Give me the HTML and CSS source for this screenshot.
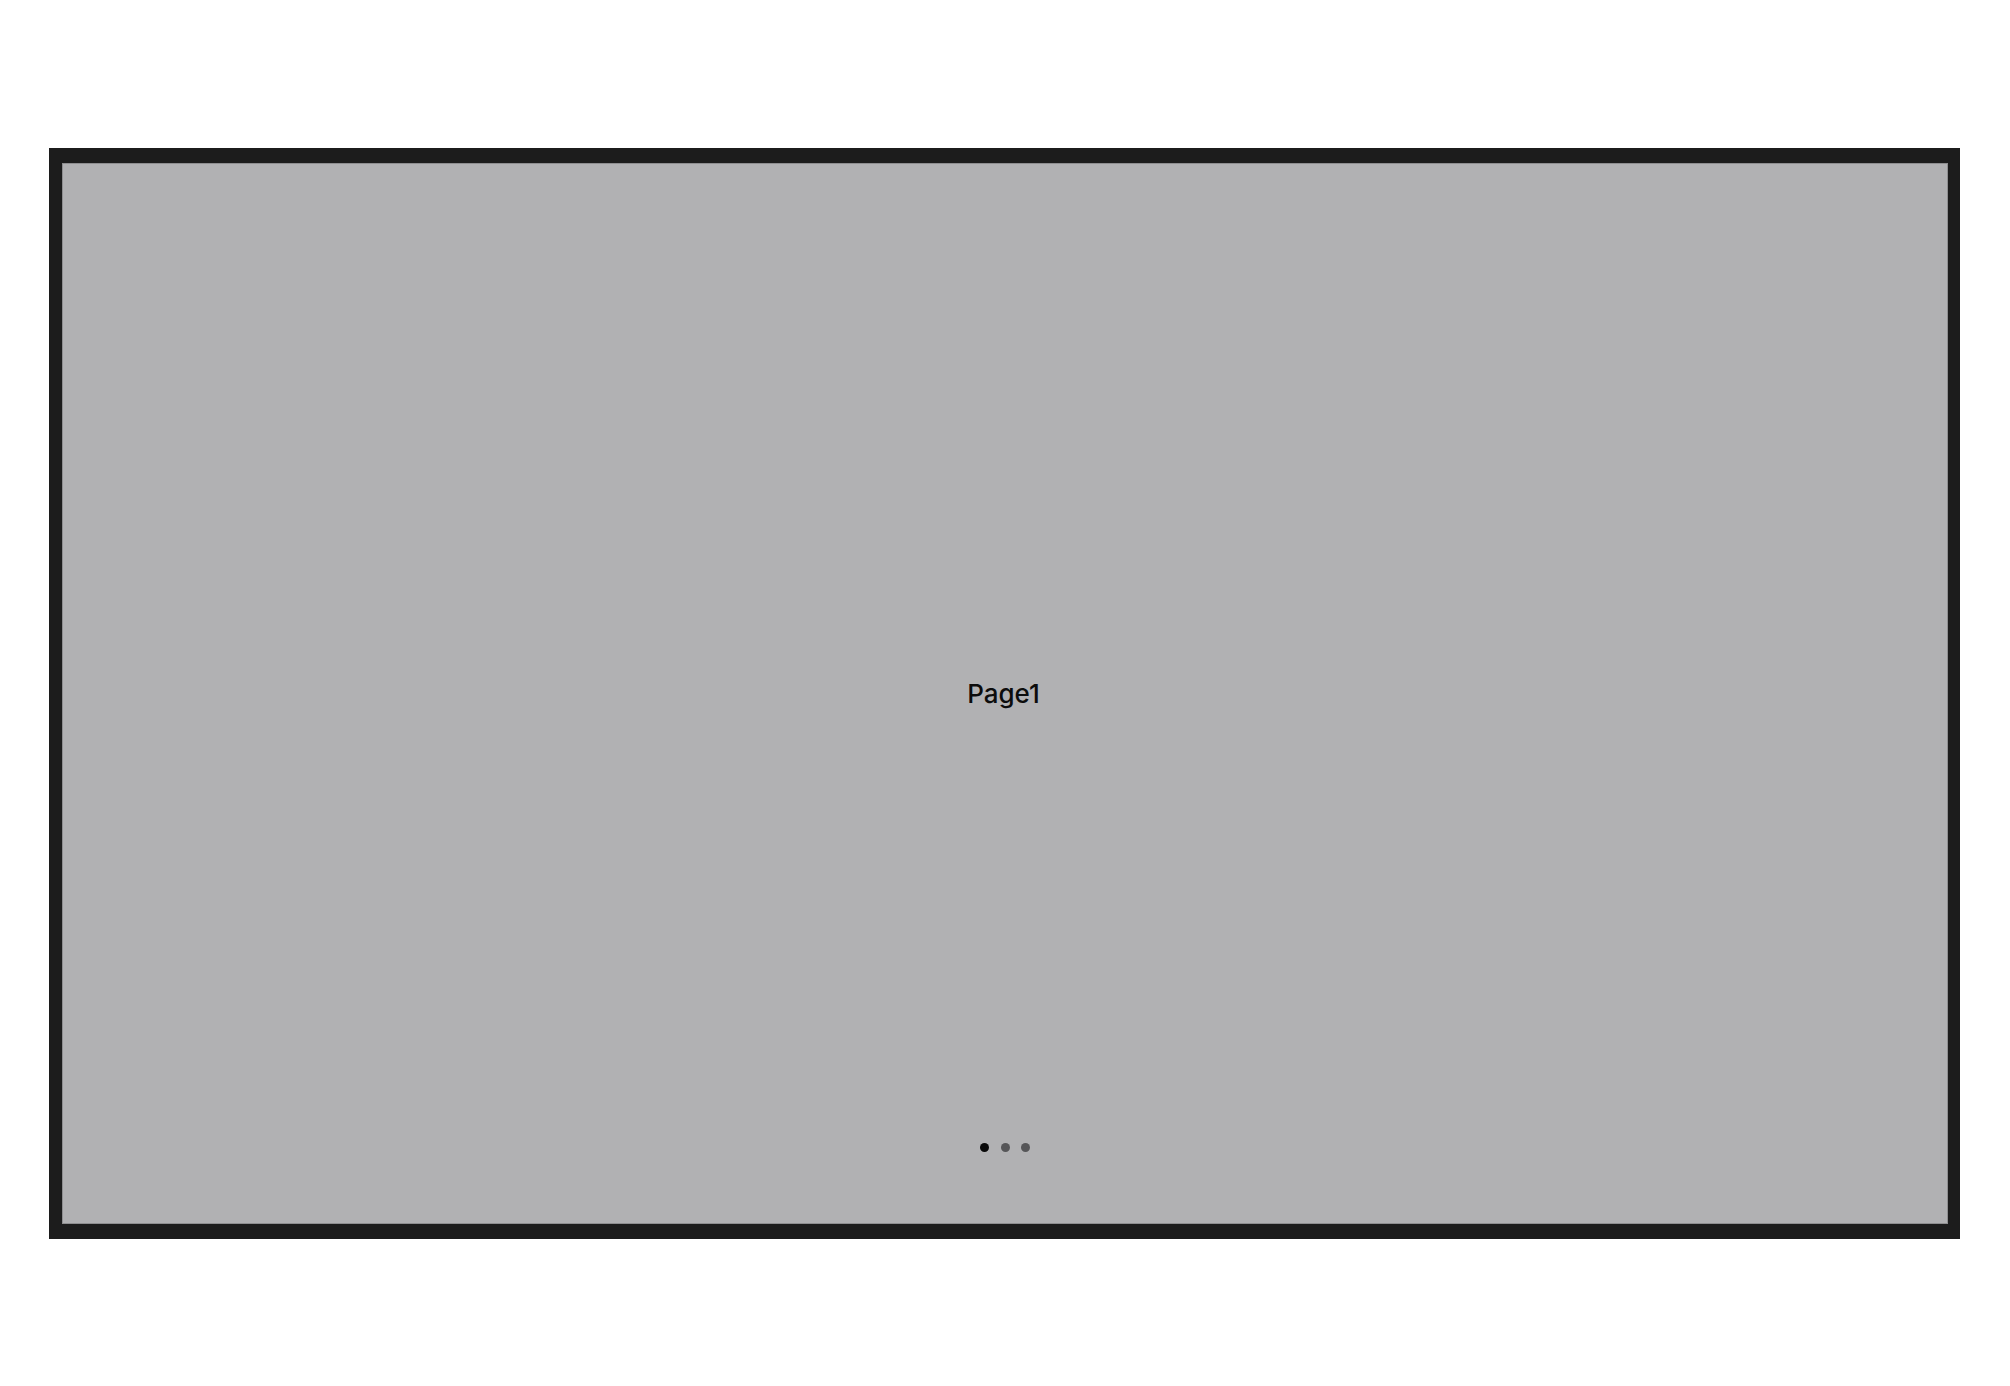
FILE: index.html
```html
<!DOCTYPE html>
<html>
<head>
<meta charset="utf-8">
<link rel="stylesheet" href="styles.css">
</head>
<body>
<div class="stage">
  <div class="frame">
    <div class="screen">
      <div class="label">Page1</div>
      <div class="dots">
        <span class="dot active"></span>
        <span class="dot"></span>
        <span class="dot"></span>
      </div>
    </div>
  </div>
</div>
</body>
</html>
```
FILE: styles.css
```css
html, body {
  margin: 0;
  padding: 0;
  background: #ffffff;
}
.stage {
  width: 2010px;
  height: 1386px;
  padding: 148px 0 0 49px;
  box-sizing: border-box;
}
.frame {
  width: 1911px;
  height: 1091px;
  box-sizing: border-box;
  background: #1c1c1c;
  padding: 15px 12px 15px 13px;
}
.screen {
  position: relative;
  width: 100%;
  height: 100%;
  background: #b1b1b3;
  box-shadow: inset 0 0 0 1px #8e8e90;
  display: flex;
  align-items: center;
  justify-content: center;
}
.label {
  font-family: Inter, "Liberation Sans", sans-serif;
  font-size: 26px;
  font-weight: 500;
  color: #0c0c0c;
  margin-left: -3px;
}
.dots {
  position: absolute;
  left: 0;
  right: 0;
  bottom: 72px;
  display: flex;
  justify-content: center;
  gap: 11.5px;
}
.dot {
  width: 9px;
  height: 9px;
  border-radius: 50%;
  background: #565658;
}
.dot.active {
  background: #0a0a0a;
}
```
